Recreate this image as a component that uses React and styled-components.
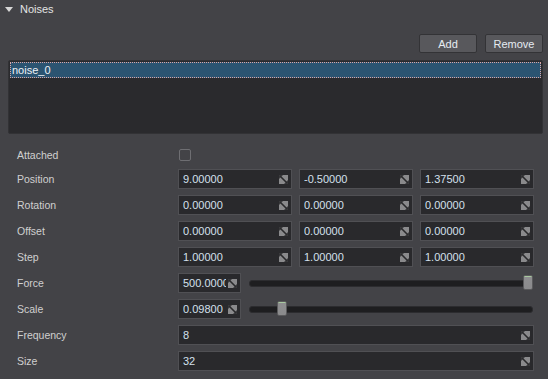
import React from 'react';
import styled, { createGlobalStyle } from 'styled-components';

const GlobalStyle = createGlobalStyle`
  html, body {
    margin: 0;
    padding: 0;
    background: #434347;
  }
  body {
    font-family: 'Liberation Sans', Arial, sans-serif;
    font-size: 10.5px;
    color: #d2d2d2;
  }
`;

const Panel = styled.div`
  width: 548px;
  height: 379px;
  background: #434347;
  overflow: hidden;
`;

const Header = styled.div`
  display: flex;
  align-items: center;
  height: 18px;
  padding-left: 5px;
`;

const Caret = styled.span`
  width: 0;
  height: 0;
  border-left: 4px solid transparent;
  border-right: 4px solid transparent;
  border-top: 5px solid #d8d8d8;
  margin-right: 7px;
`;

const Title = styled.span`
  color: #e4e4e4;
  font-size: 11px;
`;

const ButtonBar = styled.div`
  display: flex;
  justify-content: flex-end;
  gap: 8px;
  padding-right: 5px;
  margin-top: 16px;
`;

const Button = styled.button`
  width: 58px;
  height: 19px;
  padding: 0;
  background: #58585c;
  border: 1px solid #333336;
  border-radius: 2px;
  color: #e6ecf2;
  font-family: inherit;
  font-size: 11px;
`;

const ListBox = styled.div`
  margin: 7px 5px 0 8px;
  height: 70px;
  background: #2a2a2d;
  border: 1px solid #323235;
  border-radius: 2px;
  padding: 1px;
`;

const ListItem = styled.div`
  height: 16px;
  line-height: 16px;
  padding-left: 2px;
  background: ${p => (p.$selected ? '#2b5471' : 'transparent')};
  outline: ${p => (p.$selected ? '1px dotted #d9a6a6' : 'none')};
  outline-offset: -1px;
  color: #eef2f6;
  font-size: 11px;
`;

const Form = styled.div`
  display: grid;
  grid-template-columns: 161px 1fr;
  grid-template-rows: 16px;
  grid-auto-rows: 20px;
  row-gap: 6px;
  padding: 0 14px 0 17px;
  margin-top: 13px;
`;

const Label = styled.div`
  display: flex;
  align-items: center;
  color: #d0d0d0;
`;

const Controls = styled.div`
  display: flex;
  align-items: center;
  gap: 7px;
`;

const Checkbox = styled.span`
  width: 10px;
  height: 10px;
  margin-left: 1px;
  border: 1px solid #6e6e72;
  border-radius: 2px;
`;

const Field = styled.div`
  flex: ${p => (p.$w ? `0 0 ${p.$w}px` : '1 1 0')};
  min-width: 0;
  height: 20px;
  box-sizing: border-box;
  display: flex;
  align-items: center;
  gap: 2px;
  background: #29292c;
  border: 1px solid #505054;
  padding: 0 3px 0 4px;
  overflow: hidden;
`;

const Value = styled.span`
  flex: 1;
  min-width: 0;
  color: #d4e0ec;
  white-space: nowrap;
  overflow: hidden;
  font-size: 11px;
`;

const Track = styled.div`
  position: relative;
  flex: 1;
  height: 5px;
  margin-left: 1px;
  margin-right: 1px;
  background: #1e1e20;
  border: 1px solid #2c2c2f;
  border-radius: 3px;
`;

const Thumb = styled.div`
  position: absolute;
  top: -6px;
  width: 10px;
  height: 15px;
  box-sizing: border-box;
  background: linear-gradient(#a8c8a0 0, #a8c8a0 1px, #8e8e90 1px, #8a8a8c 100%);
  border: 1px solid #5a5a5c;
  border-radius: 2px;
`;

const Spin = () => (
  <svg width="9" height="9" viewBox="0 0 9 9" style={{ flex: 'none' }}>
    <rect x="0" y="0" width="9" height="9" fill="#8a8a8c" />
    <path d="M0 0 L4 0 L0 4 Z" fill="#3a3a3c" />
    <path d="M9 9 L5 9 L9 5 Z" fill="#3a3a3c" />
    <path d="M1 1 L8 8" stroke="#2a2a2c" strokeWidth="1.6" />
  </svg>
);

const NumField = ({ value, w }) => (
  <Field $w={w}>
    <Value>{value}</Value>
    <Spin />
  </Field>
);

const SliderRow = ({ value, pos }) => (
  <Controls>
    <NumField value={value} w={63} />
    <Track>
      <Thumb style={{ left: `${pos}px` }} />
    </Track>
  </Controls>
);

const vectors = [
  ['Position', ['9.00000', '-0.50000', '1.37500']],
  ['Rotation', ['0.00000', '0.00000', '0.00000']],
  ['Offset', ['0.00000', '0.00000', '0.00000']],
  ['Step', ['1.00000', '1.00000', '1.00000']],
];

export default function App() {
  return (
    <Panel>
      <GlobalStyle />
      <Header>
        <Caret />
        <Title>Noises</Title>
      </Header>
      <ButtonBar>
        <Button>Add</Button>
        <Button>Remove</Button>
      </ButtonBar>
      <ListBox>
        <ListItem $selected>noise_0</ListItem>
      </ListBox>
      <Form>
        <Label>Attached</Label>
        <Controls>
          <Checkbox />
        </Controls>
        {vectors.map(([name, vals]) => (
          <React.Fragment key={name}>
            <Label>{name}</Label>
            <Controls>
              {vals.map((v, i) => (
                <NumField key={i} value={v} />
              ))}
            </Controls>
          </React.Fragment>
        ))}
        <Label>Force</Label>
        <SliderRow value="500.0000" pos={273} />
        <Label>Scale</Label>
        <SliderRow value="0.09800" pos={27} />
        <Label>Frequency</Label>
        <Controls>
          <NumField value="8" />
        </Controls>
        <Label>Size</Label>
        <Controls>
          <NumField value="32" />
        </Controls>
      </Form>
    </Panel>
  );
}
